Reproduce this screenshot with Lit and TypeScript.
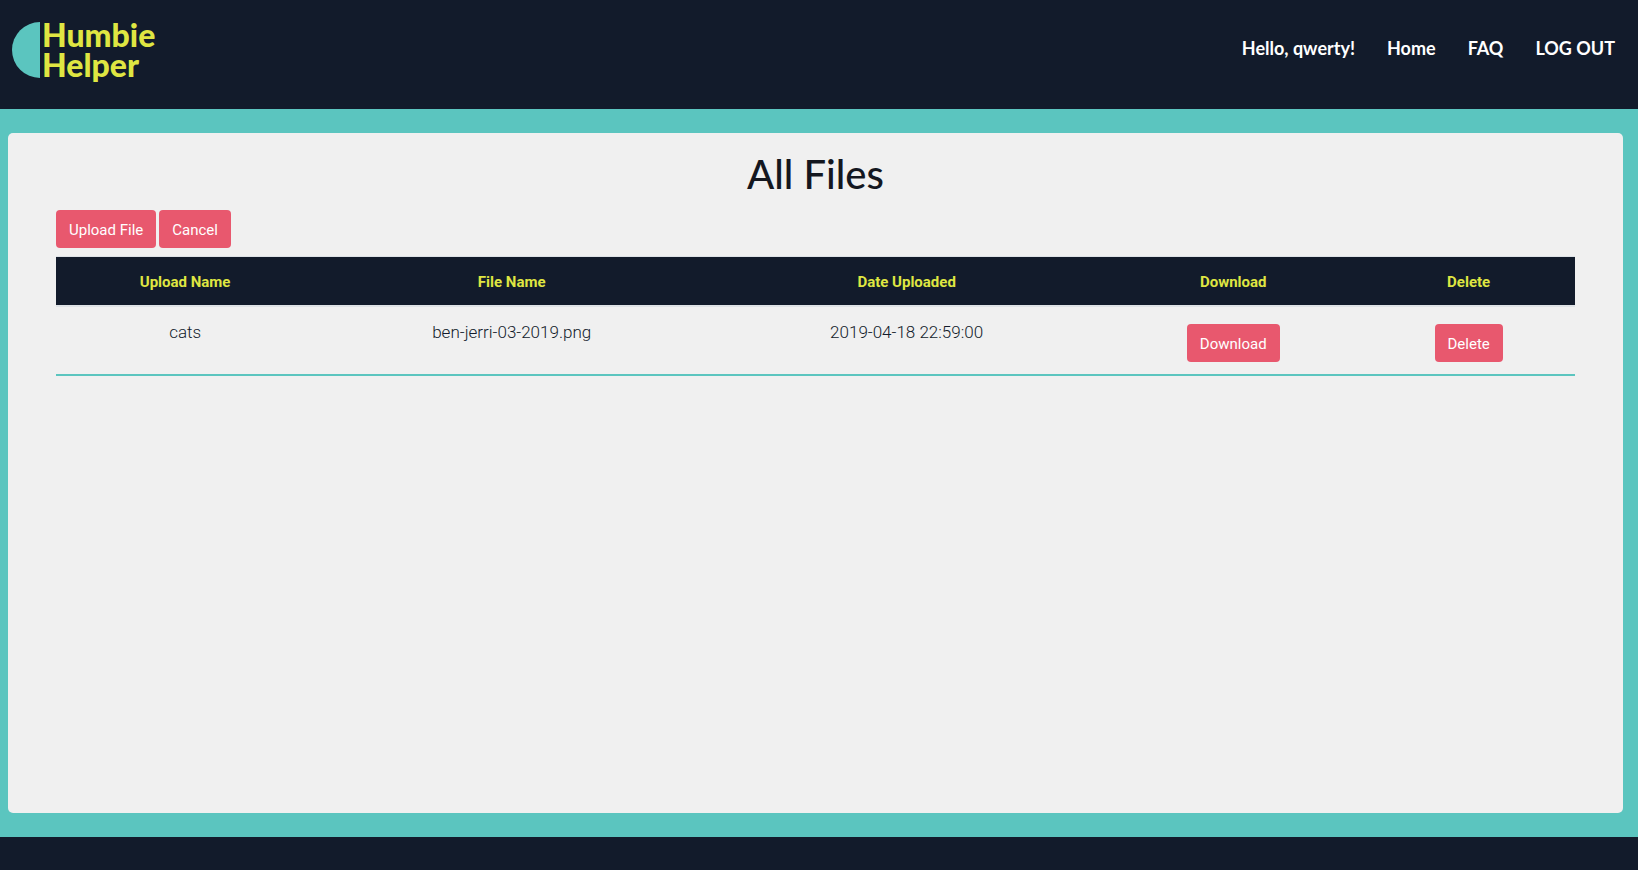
import { LitElement, html, css } from "lit";
import { customElement, state } from "lit/decorators.js";

interface UploadedFile {
  uploadName: string;
  fileName: string;
  uploadedAt: string;
}

@customElement("app-root")
export class AppRoot extends LitElement {
  static styles = css`
    :host {
      display: flex;
      flex-direction: column;
      min-height: 100vh;
      background: #5bc5bf;
      color: #121b2b;
      font: 400 15px/24px Roboto, sans-serif;
    }

    .header {
      display: flex;
      justify-content: space-between;
      align-items: flex-start;
      box-sizing: border-box;
      min-height: 109px;
      padding: 20px 23px 20px 12px;
      background: #121b2b;
    }

    .logo {
      display: flex;
      gap: 2px;
      color: #dfe642;
      font: 900 32px/30px Lato, sans-serif;
      text-decoration: none;
    }

    .logo-mark {
      flex: none;
      width: 28px;
      height: 56px;
      margin-top: 2px;
    }

    .logo-line {
      display: block;
    }

    .nav {
      display: flex;
      gap: 32px;
      padding-top: 16px;
      color: #fff;
      font: 700 18px/24px Lato, sans-serif;
    }

    .nav a {
      color: inherit;
      text-decoration: none;
    }

    .main {
      flex: 1;
      display: flex;
      padding: 24px 15px 24px 8px;
    }

    .panel {
      flex: 1;
      min-width: 0;
      padding: 17px 48px;
      border-radius: 5px;
      background: #f0f0f0;
    }

    .title {
      margin: 0 0 12px;
      color: #14171f;
      font: 500 40px/48px Lato, sans-serif;
      text-align: center;
    }

    .actions {
      display: flex;
      gap: 3px;
      margin-bottom: 8px;
    }

    .btn {
      height: 38px;
      padding: 2px 13px 0;
      border: 0;
      border-radius: 4px;
      background: #e8586e;
      color: #fff;
      font: 400 15px/24px Roboto, sans-serif;
      cursor: pointer;
    }

    .files {
      width: 100%;
      table-layout: fixed;
      border-collapse: separate;
      border-spacing: 0;
      text-align: center;
    }

    .files th,
    .files td {
      box-sizing: border-box;
      padding: 13px 12px 11px;
    }

    .files th {
      border-top: 1px solid #dee2e6;
      border-bottom: 2px solid #dee2e6;
      background: #121b2b;
      color: #dfe642;
      font-weight: 700;
    }

    .files td {
      border-bottom: 2px solid #5bc5bf;
      font-size: 17px;
      font-weight: 300;
      vertical-align: top;
    }

    .files td .btn {
      display: block;
      margin: 4px auto 1px;
    }

    .col-upload {
      width: 17%;
    }

    .col-file {
      width: 26%;
    }

    .col-date {
      width: 26%;
    }

    .col-download {
      width: 17%;
    }

    .col-delete {
      width: 14%;
    }

    .footer {
      min-height: 33px;
      background: #121b2b;
    }
  `;

  @state()
  private files: UploadedFile[] = [
    {
      uploadName: "cats",
      fileName: "ben-jerri-03-2019.png",
      uploadedAt: "2019-04-18 22:59:00",
    },
  ];

  render() {
    return html`
      <header class="header">
        <a class="logo" href="#">
          <svg class="logo-mark" viewBox="0 0 28 56" aria-hidden="true">
            <path d="M28 0A28 28 0 0 0 28 56Z" fill="#5bc5bf" />
          </svg>
          <span>
            <span class="logo-line">Humbie</span>
            <span class="logo-line">Helper</span>
          </span>
        </a>
        <nav class="nav">
          <span>Hello, qwerty!</span>
          <a href="#">Home</a>
          <a href="#">FAQ</a>
          <a href="#">LOG OUT</a>
        </nav>
      </header>
      <main class="main">
        <section class="panel">
          <h1 class="title">All Files</h1>
          <div class="actions">
            <button class="btn" type="button">Upload File</button>
            <button class="btn" type="button">Cancel</button>
          </div>
          <table class="files">
            <thead>
              <tr>
                <th class="col-upload" scope="col">Upload Name</th>
                <th class="col-file" scope="col">File Name</th>
                <th class="col-date" scope="col">Date Uploaded</th>
                <th class="col-download" scope="col">Download</th>
                <th class="col-delete" scope="col">Delete</th>
              </tr>
            </thead>
            <tbody>
              ${this.files.map(
                (file) => html`
                  <tr>
                    <td>${file.uploadName}</td>
                    <td>${file.fileName}</td>
                    <td>${file.uploadedAt}</td>
                    <td><button class="btn" type="button">Download</button></td>
                    <td><button class="btn" type="button">Delete</button></td>
                  </tr>
                `
              )}
            </tbody>
          </table>
        </section>
      </main>
      <footer class="footer"></footer>
    `;
  }
}
